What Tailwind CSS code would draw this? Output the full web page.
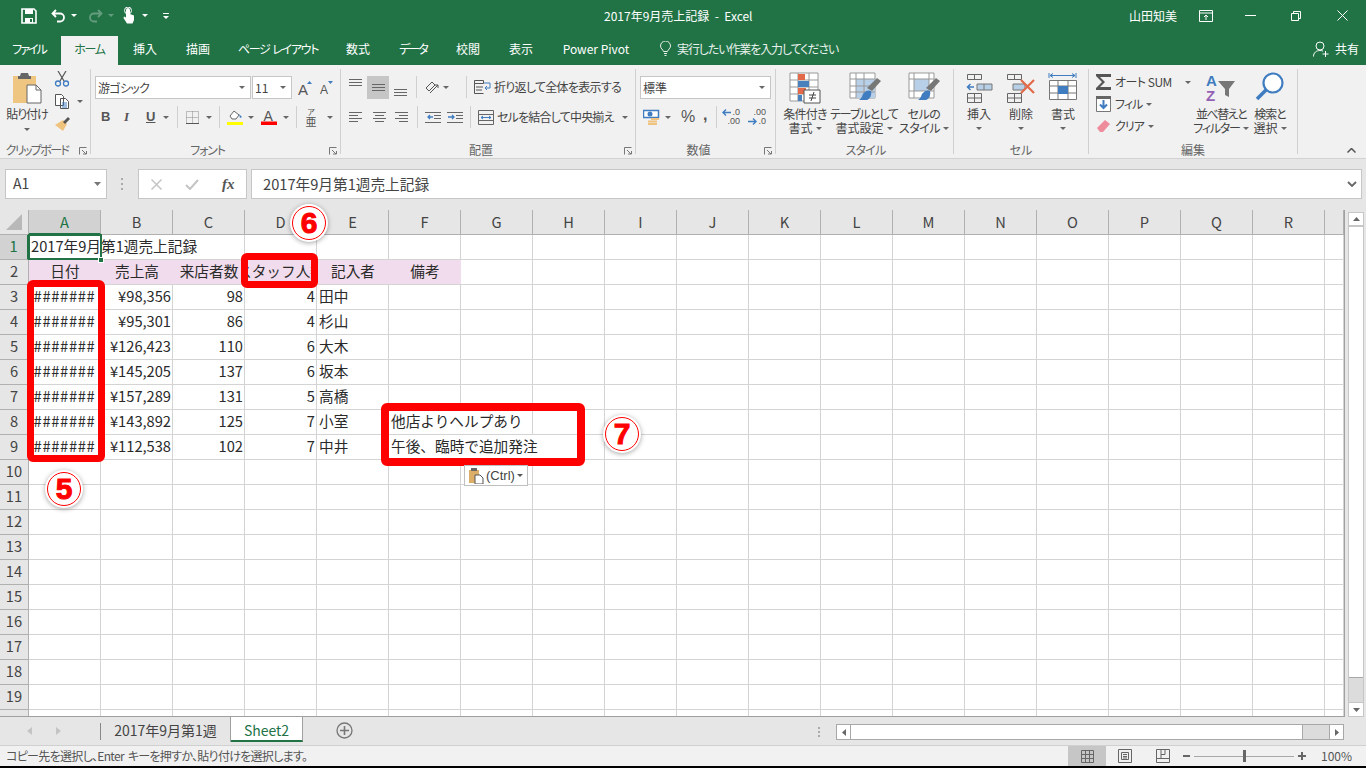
<!DOCTYPE html>
<html lang="ja">
<head>
<meta charset="UTF-8">
<title>2017年9月売上記録 - Excel</title>
<script src="https://cdn.jsdelivr.net/npm/@tailwindcss/browser@4"></script>
</head>
<body class="overflow-hidden bg-black">
<div class="relative w-[1366px] h-[768px] overflow-hidden flex flex-col font-['Noto_Sans_CJK_JP','Noto_Sans',sans-serif] text-[#444]">

  <!-- title bar -->
  <div class="h-[36px] shrink-0 bg-[#217346] text-white flex items-center pb-[5px] text-[12px]">
    <div class="w-[604px] flex items-center pl-[21px]">
      <svg class="w-[16px] h-[16px]" viewBox="0 0 16 16"><path d="M1 1h12l2 2v12H1z" fill="none" stroke="#fff" stroke-width="1.6"/><path d="M4 1h8v5H4zM4 10h8v5H4z" fill="#fff"/><path d="M9 11h2v3H9z" fill="#217346"/></svg>
      <svg class="w-[15px] h-[14px] ml-[14px]" viewBox="0 0 15 14"><path d="M5 1 1.500 4.500 5 8M2 4.500h7a4 4 0 0 1 0 8H6" fill="none" stroke="#fff" stroke-width="1.800"/></svg>
      <svg class="w-[6px] h-[3px] ml-[5px]" viewBox="0 0 6 3"><path d="M0 0h6L3 3z" fill="#fff"/></svg>
      <svg class="w-[15px] h-[14px] ml-[11px] opacity-30" viewBox="0 0 15 14"><path d="M10 1l3.500 3.500L10 8M13 4.500H6a4 4 0 0 0 0 8h3" fill="none" stroke="#fff" stroke-width="1.800"/></svg>
      <svg class="w-[6px] h-[3px] ml-[5px] opacity-30" viewBox="0 0 6 3"><path d="M0 0h6L3 3z" fill="#fff"/></svg>
      <svg class="w-[14px] h-[17px] ml-[8px]" viewBox="0 0 14 17"><path d="M4 7V3a2 2 0 0 1 4 0v4l4 1.500V13l-1.500 3.500H5L1.500 11 2 9.500l2 1z" fill="#fff"/><circle cx="6" cy="3.500" r="3.500" fill="none" stroke="#fff"/></svg>
      <svg class="w-[6px] h-[3px] ml-[6px]" viewBox="0 0 6 3"><path d="M0 0h6L3 3z" fill="#fff"/></svg>
      <svg class="w-[6px] h-[6px] ml-[15px]" viewBox="0 0 6 6"><path d="M0 0h6v1H0zM0 3h6L3 6z" fill="#fff"/></svg>
    </div>
    <div class="whitespace-pre">2017年9月売上記録  -  Excel</div>
    <div class="ml-auto flex items-center">
      <span class="w-[70px] -ml-[5px]">山田知美</span>
      <svg class="w-[14px] h-[12px] mr-[32px]" viewBox="0 0 14 12"><path d="M.5.500h13v11H.5zM.5 3h13M7 10V5M5 7l2-2 2 2" fill="none" stroke="#fff"/></svg>
      <svg class="w-[11px] h-[1px] mr-[35px]" viewBox="0 0 11 1"><path d="M0 0h11v1H0z" fill="#fff"/></svg>
      <svg class="w-[10px] h-[10px] mr-[36px]" viewBox="0 0 10 10"><path d="M.5 2.500h7v7h-7zM2.500 2.500v-2h7v7h-2" fill="none" stroke="#fff"/></svg>
      <svg class="w-[11px] h-[11px] mr-[18px]" viewBox="0 0 11 11"><path d="M.5.500l10 10M10.500.500l-10 10" fill="none" stroke="#fff"/></svg>
    </div>
  </div>

  <!-- ribbon tabs -->
  <div class="h-[29px] shrink-0 bg-[#217346] text-white flex text-[12px] leading-[25px] text-center [font-feature-settings:'palt']">
    <div class="w-[61px] pr-[3px] tracking-[-2px]">ファイル</div>
    <div class="w-[57px] bg-[#f1f1f1] text-[#217346] tracking-[-1.3px]">ホーム</div>
    <div class="w-[54px]">挿入</div>
    <div class="w-[52px]">描画</div>
    <div class="w-[108px] tracking-[-1.3px] whitespace-pre">ページ  レイアウト</div>
    <div class="w-[52px]">数式</div>
    <div class="w-[58px] tracking-[-2px]">データ</div>
    <div class="w-[52px]">校閲</div>
    <div class="w-[54px]">表示</div>
    <div class="w-[96px]">Power Pivot</div>
    <div class="flex items-center pl-[16px] pb-[4px] opacity-90">
      <svg class="w-[11px] h-[15px] mr-[6px]" viewBox="0 0 11 15"><path d="M3.500 10.500C3 8.500 .5 7.500.5 5a5 5 0 0 1 10 0c0 2.500-2.500 3.500-3 5.500zM4 12.500h3M4.500 14.500h2" fill="none" stroke="#fff"/></svg>
      <span class="tracking-[-1.1px]">実行したい作業を入力してください</span>
    </div>
    <div class="ml-auto flex items-center pr-[7px] pb-[4px]">
      <svg class="w-[16px] h-[16px] mr-[6px]" viewBox="0 0 16 16"><circle cx="7" cy="5" r="4" fill="none" stroke="#fff"/><path d="M.5 15.500c0-4 3-6 6.500-6 1 0 2 .2 3 .6M12.500 10v6M9.500 13h6" fill="none" stroke="#fff"/></svg>
      <span>共有</span>
    </div>
  </div>

  <!-- ribbon -->
  <div class="relative h-[94px] shrink-0 bg-[#f1f1f1] border-b border-[#d2d2d2] flex pt-[4px] text-[12px] leading-[14px] [font-feature-settings:'palt']">

    <!-- clipboard -->
    <div class="relative w-[91px] h-[85px] border-r border-[#d0d0d0] flex">
      <div class="w-[54px] flex flex-col items-center pt-[3px]">
        <svg class="w-[30px] h-[32px]" viewBox="0 0 30 32"><path d="M1 4h23v27H1z" fill="#eec682"/><path d="M6 4h2l1-3h7l1 3h2v3H6z" fill="#666"/><path d="M15 13h9l5 5v13H15z" fill="#fff" stroke="#666"/><path d="M24 13v5h5" fill="none" stroke="#666"/></svg>
        <div class="mt-[3px] h-[14px] tracking-[-1px] whitespace-nowrap">貼り付け</div>
        <svg class="w-[6px] h-[3px] mt-[7px]" viewBox="0 0 6 3"><path d="M0 0h6L3 3z" fill="#666"/></svg>
      </div>
      <div class="flex flex-col pt-[2px]">
        <svg class="w-[16px] h-[16px]" viewBox="0 0 16 16"><path d="M4 0l6 10M12 0 6 10" stroke="#555" fill="none" stroke-width="1.200"/><circle cx="4" cy="12.500" r="2.500" fill="none" stroke="#3f7cc0" stroke-width="1.300"/><circle cx="12" cy="12.500" r="2.500" fill="none" stroke="#3f7cc0" stroke-width="1.300"/></svg>
        <div class="flex items-center mt-[7px]">
          <svg class="w-[16px] h-[15px]" viewBox="0 0 16 15"><path d="M1.500.5h6l2 2v9h-8zM6.500 4.500h5l3 3v7h-8z" fill="#fff" stroke="#555" /><path d="M8 9h5M8 11h5M8 13h5" stroke="#3f7cc0"/></svg>
          <svg class="w-[6px] h-[3px] ml-[7px]" viewBox="0 0 6 3"><path d="M0 0h6L3 3z" fill="#666"/></svg>
        </div>
        <svg class="w-[16px] h-[15px] mt-[8px]" viewBox="0 0 16 15"><path d="M9 3l4 4-4 7-8-6z" fill="#efc27d"/><path d="M9 5l5-5 2 2-5 5z" fill="#555"/></svg>
      </div>
      <div class="absolute bottom-[-3px] left-[0px] w-[74px] text-center text-[#666] tracking-[-1.6px] whitespace-nowrap">クリップボード</div>
      <svg class="absolute right-[3px] bottom-[-1px] w-[8px] h-[8px]" viewBox="0 0 8 8"><path d="M.5 7.500v-7h7M3 3l4 4M4 7h3.500V4" fill="none" stroke="#777"/></svg>
    </div>

    <!-- font -->
    <div class="relative w-[250px] h-[85px] border-r border-[#d0d0d0] flex flex-col">
      <div class="mt-[7px] h-[23px] flex items-center pl-[4px]">
        <div class="w-[156px] h-[23px] bg-white border border-[#c6c6c6] flex items-center justify-between px-[2px]"><span class="tracking-[-0.7px]">游ゴシック</span><svg class="w-[6px] h-[3px] mr-[3px]" viewBox="0 0 6 3"><path d="M0 0h6L3 3z" fill="#666"/></svg></div>
        <div class="w-[40px] h-[23px] ml-[1px] bg-white border border-[#c6c6c6] flex items-center justify-between px-[2px]"><span>11</span><svg class="w-[6px] h-[3px] mr-[3px]" viewBox="0 0 6 3"><path d="M0 0h6L3 3z" fill="#666"/></svg></div>
        <svg class="w-[14px] h-[14px] ml-[6px] overflow-visible" viewBox="0 0 14 14"><text x="0" y="14" font-family="Liberation Sans" font-size="15" fill="#555">A</text><path d="M9 3h5l-2.500-3z" fill="#3f7cc0"/></svg>
        <svg class="w-[13px] h-[13px] ml-[8px] overflow-visible" viewBox="0 0 13 13"><text x="0" y="13" font-family="Liberation Sans" font-size="12" fill="#555">A</text><path d="M8 0h5l-2.500 3z" fill="#3f7cc0"/></svg>
      </div>
      <div class="mt-[6px] h-[24px] flex items-center text-[13px] font-['Liberation_Sans'] text-[#555]">
        <b class="ml-[10px] w-[10px]">B</b>
        <i class="ml-[13px] w-[8px] font-['Liberation_Serif'] font-bold">I</i>
        <b class="ml-[14px] w-[10px] underline">U</b>
        <svg class="w-[6px] h-[3px] ml-[7px]" viewBox="0 0 6 3"><path d="M0 0h6L3 3z" fill="#666"/></svg>
        <div class="w-px h-[22px] bg-[#d0d0d0] ml-[8px]"></div>
        <svg class="w-[13px] h-[13px] ml-[8px]" viewBox="0 0 13 13"><path d="M.5.500h12v12H.5zM6.500.500v12M.5 6.500h12" fill="none" stroke="#888" stroke-dasharray="1 1"/><path d="M0 12.500h13" stroke="#555"/></svg>
        <svg class="w-[6px] h-[3px] ml-[7px]" viewBox="0 0 6 3"><path d="M0 0h6L3 3z" fill="#666"/></svg>
        <div class="w-px h-[22px] bg-[#d0d0d0] ml-[7px]"></div>
        <svg class="w-[16px] h-[16px] ml-[7px]" viewBox="0 0 16 16"><path d="M3 7l4-5 5 4-3 4H5z" fill="#fff" stroke="#666"/><path d="M12 5l3 3-2 1z" fill="#3f7cc0"/><path d="M0 13h16v3H0z" fill="#ffff00"/></svg>
        <svg class="w-[6px] h-[3px] ml-[5px]" viewBox="0 0 6 3"><path d="M0 0h6L3 3z" fill="#666"/></svg>
        <svg class="w-[16px] h-[16px] ml-[7px]" viewBox="0 0 16 16"><text x="2.500" y="12" font-family="Liberation Sans" font-size="14" fill="#555">A</text><path d="M0 12.500h16v3.500H0z" fill="#ff0000"/></svg>
        <svg class="w-[6px] h-[3px] ml-[6px]" viewBox="0 0 6 3"><path d="M0 0h6L3 3z" fill="#666"/></svg>
        <div class="w-px h-[22px] bg-[#d0d0d0] ml-[7px]"></div>
        <span class="ml-[8px] w-[12px] text-[11px] leading-[11px] text-center font-['Noto_Sans_CJK_JP']"><span class="block text-[8px] leading-[8px]">ア</span>亜</span>
        <svg class="w-[6px] h-[3px] ml-[10px]" viewBox="0 0 6 3"><path d="M0 0h6L3 3z" fill="#666"/></svg>
      </div>
      <div class="absolute bottom-[-3px] left-0 right-[16px] text-center text-[#666] tracking-[-1.2px]">フォント</div>
      <svg class="absolute right-[3px] bottom-[-1px] w-[8px] h-[8px]" viewBox="0 0 8 8"><path d="M.5 7.500v-7h7M3 3l4 4M4 7h3.500V4" fill="none" stroke="#777"/></svg>
    </div>

    <!-- alignment -->
    <div class="relative w-[295px] h-[85px] border-r border-[#d0d0d0] flex flex-col">
      <div class="mt-[6px] h-[24px] flex items-center pl-[8px]">
        <svg class="w-[13px] h-[24px]" viewBox="0 0 13 24"><path d="M0 4.500h13M0 7.500h13M0 10.500h13" stroke="#666"/></svg>
        <div class="ml-[5px] w-[22px] h-[23px] bg-[#c6c6c6] flex items-center justify-center"><svg class="w-[13px] h-[7px]" viewBox="0 0 13 7"><path d="M0 .5h13M0 3.500h13M0 6.500h13" stroke="#666"/></svg></div>
        <svg class="w-[13px] h-[24px] ml-[5px]" viewBox="0 0 13 24"><path d="M0 14.500h13M0 17.500h13M0 20.500h13" stroke="#666"/></svg>
        <div class="w-px h-[22px] bg-[#d0d0d0] ml-[9px]"></div>
        <svg class="w-[15px] h-[15px] ml-[8px]" viewBox="0 0 15 15"><path d="M1 8l6-6 3 3-6 6zM5 13l8-8M13 5v3M13 5h-3" fill="none" stroke="#555"/></svg>
        <svg class="w-[6px] h-[3px] ml-[3px]" viewBox="0 0 6 3"><path d="M0 0h6L3 3z" fill="#666"/></svg>
        <div class="w-px h-[22px] bg-[#d0d0d0] ml-[17px]"></div>
        <svg class="w-[17px] h-[15px] ml-[7px]" viewBox="0 0 17 15"><path d="M.5.500h9v3h-9zM.5 3.500v10h9M2 7h7M2 10h6" fill="none" stroke="#555"/><path d="M10 3h6v5h-5M13 6l-2 2 2 2" fill="none" stroke="#3f7cc0"/></svg>
        <span class="ml-[3px] tracking-[-0.7px] whitespace-nowrap">折り返して全体を表示する</span>
      </div>
      <div class="mt-[6px] h-[24px] flex items-center pl-[8px]">
        <svg class="w-[13px] h-[10px]" viewBox="0 0 13 10"><path d="M0 .5h13M0 3.500h9M0 6.500h13M0 9.500h9" stroke="#666"/></svg>
        <svg class="w-[13px] h-[10px] ml-[11px]" viewBox="0 0 13 10"><path d="M0 .5h13M2 3.500h9M0 6.500h13M2 9.500h9" stroke="#666"/></svg>
        <svg class="w-[13px] h-[10px] ml-[9px]" viewBox="0 0 13 10"><path d="M0 .5h13M4 3.500h9M0 6.500h13M4 9.500h9" stroke="#666"/></svg>
        <div class="w-px h-[22px] bg-[#d0d0d0] ml-[9px]"></div>
        <svg class="w-[16px] h-[11px] ml-[7px]" viewBox="0 0 16 11"><path d="M0 .5h16M9 3.500h7M9 6.500h7M0 10.500h16" stroke="#666"/><path d="M8 5H3M5 3 3 5l2 2" fill="none" stroke="#3f7cc0" stroke-width="1.300"/></svg>
        <svg class="w-[16px] h-[11px] ml-[6px]" viewBox="0 0 16 11"><path d="M0 .5h16M9 3.500h7M9 6.500h7M0 10.500h16" stroke="#666"/><path d="M1 5h6M5 3l2 2-2 2" fill="none" stroke="#3f7cc0" stroke-width="1.300"/></svg>
        <div class="w-px h-[22px] bg-[#d0d0d0] ml-[7px]"></div>
        <svg class="w-[16px] h-[15px] ml-[7px] shrink-0" viewBox="0 0 16 15"><path d="M.5.500h15v14H.5zM.5 4.500h15M.5 10.500h15" fill="none" stroke="#666"/><path d="M3 7.500h10M5 6 3 7.500 5 9M11 6l2 1.500L11 9" fill="none" stroke="#3f7cc0"/></svg>
        <span class="ml-[3px] w-[119px] tracking-[-0.8px] whitespace-nowrap">セルを結合して中央揃え</span>
        <svg class="w-[6px] h-[3px] ml-[6px]" viewBox="0 0 6 3"><path d="M0 0h6L3 3z" fill="#666"/></svg>
      </div>
      <div class="absolute bottom-[-3px] left-0 right-[14px] text-center text-[#666]">配置</div>
      <svg class="absolute right-[3px] bottom-[-1px] w-[8px] h-[8px]" viewBox="0 0 8 8"><path d="M.5 7.500v-7h7M3 3l4 4M4 7h3.500V4" fill="none" stroke="#777"/></svg>
    </div>

    <!-- number -->
    <div class="relative w-[140px] h-[85px] border-r border-[#d0d0d0] flex flex-col">
      <div class="mt-[7px] h-[23px] pl-[4px] flex items-center">
        <div class="w-[131px] h-[23px] bg-white border border-[#c6c6c6] flex items-center justify-between px-[2px]"><span>標準</span><svg class="w-[6px] h-[3px] mr-[3px]" viewBox="0 0 6 3"><path d="M0 0h6L3 3z" fill="#666"/></svg></div>
      </div>
      <div class="mt-[6px] h-[24px] flex items-center pl-[7px] font-['Liberation_Sans']">
        <svg class="w-[17px] h-[16px]" viewBox="0 0 17 16"><path d="M.5 1.500h15v7H.5z" fill="#fff" stroke="#3f7cc0" stroke-width="1.500"/><circle cx="7" cy="5" r="2.500" fill="#3f7cc0"/><path d="M8 9h8v2H8zM5 11.500h9v2H5zM5 14h9v2H5z" fill="#efc27d"/></svg>
        <svg class="w-[6px] h-[3px] ml-[5px]" viewBox="0 0 6 3"><path d="M0 0h6L3 3z" fill="#666"/></svg>
        <span class="ml-[10px] w-[14px] text-[16px] text-[#555] -mr-[2px]">%</span>
        <b class="ml-[10px] w-[6px] text-[16px] leading-[12px] pb-[4px] text-[#555]">,</b>
        <div class="w-px h-[22px] bg-[#d0d0d0] ml-[7px]"></div>
        <div class="w-[20px] ml-[3px] text-[9px] leading-[9px] text-[#555] flex flex-col items-end"><span class="flex items-center"><svg class="w-[9px] h-[7px] mr-[1px]" viewBox="0 0 9 7"><path d="M9 3.500H1M4 .5 1 3.500l3 3" fill="none" stroke="#3f7cc0" stroke-width="1.400"/></svg>.0</span><span>.00</span></div>
        <div class="w-[20px] ml-[6px] text-[9px] leading-[9px] text-[#555] flex flex-col items-end"><span>.00</span><span class="flex items-center"><svg class="w-[9px] h-[7px] mr-[1px]" viewBox="0 0 9 7"><path d="M0 3.500h8M5 .5l3 3-3 3" fill="none" stroke="#3f7cc0" stroke-width="1.400"/></svg>.0</span></div>
      </div>
      <div class="absolute bottom-[-3px] left-[-14px] right-0 text-center text-[#666]">数値</div>
      <svg class="absolute right-[3px] bottom-[-1px] w-[8px] h-[8px]" viewBox="0 0 8 8"><path d="M.5 7.500v-7h7M3 3l4 4M4 7h3.500V4" fill="none" stroke="#777"/></svg>
    </div>

    <!-- styles -->
    <div class="relative w-[178px] h-[85px] border-r border-[#d0d0d0] flex pl-[3px]">
      <div class="w-[52px] flex flex-col items-center pt-[3px]">
        <svg class="w-[32px] h-[32px]" viewBox="0 0 32 32"><path d="M1 1h28v28H1z" fill="#fff" stroke="#999"/><path d="M9 1v28M20 1v28M1 8h28M1 15h28M1 22h28" stroke="#999"/><path d="M9 2h7v6H9z" fill="#e2694a"/><path d="M9 9h11v6H9z" fill="#4a80bb"/><path d="M9 16h8v6H9z" fill="#e2694a"/><path d="M9 23h4v6H9z" fill="#4a80bb"/><path d="M15 18h16v13H15z" fill="#fff" stroke="#555"/><path d="M20 23h7M20 26h7M25 20l-3 9" stroke="#444" fill="none"/></svg>
        <div class="mt-[3px] h-[14px] whitespace-nowrap tracking-[-0.7px]">条件付き</div>
        <div class="h-[14px] flex items-center whitespace-nowrap">書式<svg class="w-[6px] h-[3px] ml-[3px]" viewBox="0 0 6 3"><path d="M0 0h6L3 3z" fill="#666"/></svg></div>
      </div>
      <div class="w-[66px] flex flex-col items-center pt-[3px]">
        <svg class="w-[32px] h-[32px] ml-[2px]" viewBox="0 0 32 32"><path d="M1 1h25v25H1z" fill="#fff" stroke="#999"/><path d="M7 7h19v19H7z" fill="#b8cfe8"/><path d="M7 1v25M15 1v25M1 7h25M1 14h25M1 20h25" stroke="#999"/><path d="M18 16l10-10 4 3-9 10z" fill="#777"/><path d="M14 22c3-4 6-4 8-3 1 4-1 8-4 9h-8c2-1 3-3 4-6z" fill="#3f7cc0"/></svg>
        <div class="mt-[3px] h-[14px] whitespace-nowrap tracking-[-1px]">テーブルとして</div>
        <div class="h-[14px] flex items-center whitespace-nowrap">書式設定<svg class="w-[6px] h-[3px] ml-[3px]" viewBox="0 0 6 3"><path d="M0 0h6L3 3z" fill="#666"/></svg></div>
      </div>
      <div class="w-[50px] ml-[2px] flex flex-col items-center pt-[3px]">
        <svg class="w-[32px] h-[32px]" viewBox="0 0 32 32"><path d="M1 1h25v25H1z" fill="#fff" stroke="#999"/><path d="M6 7h15v12H6z" fill="#b8cfe8"/><path d="M6 1v25M21 1v25M1 7h25M1 19h25" stroke="#999"/><path d="M18 16l10-10 4 3-9 10z" fill="#777"/><path d="M14 22c3-4 6-4 8-3 1 4-1 8-4 9h-8c2-1 3-3 4-6z" fill="#3f7cc0"/></svg>
        <div class="mt-[3px] h-[14px] whitespace-nowrap tracking-[-0.5px]">セルの</div>
        <div class="h-[14px] flex items-center whitespace-nowrap tracking-[-0.5px]">スタイル<svg class="w-[6px] h-[3px] ml-[3px]" viewBox="0 0 6 3"><path d="M0 0h6L3 3z" fill="#666"/></svg></div>
      </div>
      <div class="absolute bottom-[-3px] left-0 right-[-2px] text-center text-[#666] tracking-[-0.8px]">スタイル</div>
    </div>

    <!-- cells -->
    <div class="relative w-[135px] h-[85px] border-r border-[#d0d0d0] flex pl-[4px]">
      <div class="w-[42px] flex flex-col items-center pt-[3px]">
        <svg class="w-[27px] h-[32px]" viewBox="0 0 27 32"><path d="M1.500 2.500h14v5h-14zM8.500 2.500v5M1.500 21.500h14v9h-14zM1.500 26h14M8.500 21.500v9" fill="none" stroke="#666"/><path d="M11 12h15v6H11zM18 12v6" fill="#b8cfe8" stroke="#777"/><path d="M8 15H2M4.500 12 1.500 15l3 3" fill="none" stroke="#3f7cc0" stroke-width="1.500"/></svg>
        <div class="mt-[3px] h-[14px]">挿入</div>
        <svg class="w-[6px] h-[3px] mt-[6px]" viewBox="0 0 6 3"><path d="M0 0h6L3 3z" fill="#666"/></svg>
      </div>
      <div class="w-[42px] flex flex-col items-center pt-[3px]">
        <svg class="w-[30px] h-[32px]" viewBox="0 0 30 32"><path d="M1.500 2.500h14v5h-14zM8.500 2.500v5M1.500 21.500h14v9h-14zM1.500 26h14M8.500 21.500v9" fill="none" stroke="#666"/><path d="M7 12h12v6H7z" fill="#b8cfe8" stroke="#777"/><path d="M15 8l13 13M28 8 15 21" stroke="#e2694a" stroke-width="2.200"/></svg>
        <div class="mt-[3px] h-[14px]">削除</div>
        <svg class="w-[6px] h-[3px] mt-[6px]" viewBox="0 0 6 3"><path d="M0 0h6L3 3z" fill="#666"/></svg>
      </div>
      <div class="w-[42px] flex flex-col items-center pt-[3px]">
        <svg class="w-[30px] h-[32px]" viewBox="0 0 30 32"><path d="M1 1v5M28 1v5M2 3.500h25M2 3.500l3-2M2 3.500l3 2M27 3.500l-3-2M27 3.500l-3 2" fill="none" stroke="#3f7cc0"/><path d="M1.500 8.500h27v19h-27zM10 8.500v19M20 8.500v19M1.500 14h27M1.500 21h27" fill="#fff" stroke="#777"/><path d="M10 14h10v8H10z" fill="#3f7cc0"/></svg>
        <div class="mt-[3px] h-[14px]">書式</div>
        <svg class="w-[6px] h-[3px] mt-[6px]" viewBox="0 0 6 3"><path d="M0 0h6L3 3z" fill="#666"/></svg>
      </div>
      <div class="absolute bottom-[-3px] left-0 right-0 text-center text-[#666]">セル</div>
    </div>

    <!-- editing -->
    <div class="relative w-[209px] h-[85px] border-r border-[#d0d0d0] flex pl-[7px]">
      <div class="w-[100px] flex flex-col pt-[2px]">
        <div class="h-[22px] flex items-center"><svg class="w-[16px] h-[16px]" viewBox="0 0 16 16"><path d="M0 0h15v3H4l5 5-5 5h11v3H0v-2l6-6-6-6z" fill="#555"/></svg><span class="ml-[3px] w-[62px] tracking-[-0.5px] whitespace-nowrap">オート SUM</span><svg class="w-[6px] h-[3px] ml-[8px]" viewBox="0 0 6 3"><path d="M0 0h6L3 3z" fill="#666"/></svg></div>
        <div class="h-[22px] flex items-center"><svg class="w-[15px] h-[16px]" viewBox="0 0 15 16"><path d="M.5.500h14v15H.5z" fill="#fff" stroke="#777"/><path d="M0 0h15v3H0z" fill="#666"/><path d="M7.500 4v8M4 8.500l3.500 3.500L11 8.500" fill="none" stroke="#3f7cc0" stroke-width="2"/></svg><span class="ml-[4px] tracking-[-1px]">フィル</span><svg class="w-[6px] h-[3px] ml-[4px]" viewBox="0 0 6 3"><path d="M0 0h6L3 3z" fill="#666"/></svg></div>
        <div class="h-[22px] flex items-center"><svg class="w-[15px] h-[14px]" viewBox="0 0 15 14"><path d="M9 1l5 4-7 8H4L1 9z" fill="#ee8c9c"/></svg><span class="ml-[4px] tracking-[-1px]">クリア</span><svg class="w-[6px] h-[3px] ml-[4px]" viewBox="0 0 6 3"><path d="M0 0h6L3 3z" fill="#666"/></svg></div>
      </div>
      <div class="w-[60px] flex flex-col items-center pt-[3px] -ml-[5px]">
        <svg class="w-[32px] h-[32px]" viewBox="0 0 32 32"><text x="1" y="14" font-family="Liberation Sans" font-weight="bold" font-size="15" fill="#3f7cc0">A</text><text x="1" y="29" font-family="Liberation Sans" font-weight="bold" font-size="15" fill="#9360b5">Z</text><path d="M13 9h17l-6 8v8l-4-2v-6z" fill="#777"/></svg>
        <div class="mt-[3px] h-[14px] whitespace-nowrap tracking-[-1.5px]">並べ替えと</div>
        <div class="h-[14px] flex items-center whitespace-nowrap tracking-[-1.2px]">フィルター<svg class="w-[6px] h-[3px] ml-[3px]" viewBox="0 0 6 3"><path d="M0 0h6L3 3z" fill="#666"/></svg></div>
      </div>
      <div class="w-[38px] flex flex-col items-center pt-[3px]">
        <svg class="w-[30px] h-[30px]" viewBox="0 0 30 30"><circle cx="18" cy="11" r="9.500" fill="#fff" stroke="#3f7cc0" stroke-width="2.200"/><path d="M11 18 2 27" stroke="#3f7cc0" stroke-width="3.500"/></svg>
        <div class="mt-[5px] h-[14px] whitespace-nowrap tracking-[-1px]">検索と</div>
        <div class="h-[14px] flex items-center whitespace-nowrap">選択<svg class="w-[6px] h-[3px] ml-[3px]" viewBox="0 0 6 3"><path d="M0 0h6L3 3z" fill="#666"/></svg></div>
      </div>
      <div class="absolute bottom-[-3px] left-0 right-0 text-center text-[#666]">編集</div>
    </div>

    <svg class="absolute right-[10px] bottom-[5px] w-[9px] h-[5px]" viewBox="0 0 9 5"><path d="M.5 4.500l4-4 4 4" fill="none" stroke="#555" stroke-width="1.500"/></svg>
  </div>

  <!-- formula bar -->
  <div class="h-[51px] shrink-0 bg-[#e6e6e6] pt-[10px] flex items-start">
    <div class="ml-[5px] w-[102px] h-[30px] bg-white border border-[#c6c6c6] flex items-center justify-between pl-[7px] pr-[5px] pb-[1px] text-[14px] text-[#444]"><span>A1</span><svg class="w-[7px] h-[4px]" viewBox="0 0 7 4"><path d="M0 0h7L3.500 4z" fill="#777"/></svg></div>
    <svg class="ml-[14px] mt-[9px] w-[3px] h-[12px]" viewBox="0 0 3 12"><path d="M0 0h2v2H0zM0 5h2v2H0zM0 10h2v2H0z" fill="#aaa"/></svg>
    <div class="ml-[14px] w-[109px] h-[30px] bg-white border border-[#c6c6c6] flex items-center">
      <svg class="ml-[12px] w-[11px] h-[11px]" viewBox="0 0 11 11"><path d="M.5.500l10 10M10.500.500l-10 10" stroke="#c4c4c4" stroke-width="1.500"/></svg>
      <svg class="ml-[23px] w-[14px] h-[11px]" viewBox="0 0 14 11"><path d="M1 6l4 4 8-9" fill="none" stroke="#c4c4c4" stroke-width="2"/></svg>
      <i class="ml-[23px] font-['Liberation_Serif'] font-bold text-[15px] text-[#555]">fx</i>
    </div>
    <div class="ml-[4px] w-[1111px] h-[30px] bg-white border border-[#c6c6c6] flex items-center justify-between pl-[11px] pr-[4px] pb-[1px] text-[14.67px] text-[#444]"><span>2017年9月第1週売上記録</span><svg class="w-[10px] h-[6px]" viewBox="0 0 10 6"><path d="M1 1l4 4 4-4" fill="none" stroke="#666" stroke-width="1.800"/></svg></div>
  </div>

  <!-- sheet grid and vertical scrollbar -->
  <div class="h-[507px] shrink-0 bg-[#e6e6e6] flex">
    <div id="sheet" class="w-[1345px] h-[507px] overflow-hidden bg-white border-r border-b border-[#a0a0a0] text-[14.67px] leading-[22px] text-[#2a2a2a] grid grid-cols-[29px_repeat(18,72px)_19px] auto-rows-[25px]"></div>
    <div class="ml-[3px] w-[16px] mt-[2px] flex flex-col h-[505px] border-x border-[#c6c6c6] bg-[#dcdcdc]">
      <div class="h-[15px] bg-white border-t border-b-2 border-[#c6c6c6] flex items-center justify-center"><svg class="w-[7px] h-[4px]" viewBox="0 0 7 4"><path d="M0 4h7L3.500 0z" fill="#666"/></svg></div>
      <div class="h-[451px] bg-white border-b border-[#a8a8a8]"></div>
      <div class="mt-auto h-[15px] bg-white border-y border-[#c6c6c6] flex items-center justify-center"><svg class="w-[7px] h-[4px]" viewBox="0 0 7 4"><path d="M0 0h7L3.500 4z" fill="#666"/></svg></div>
    </div>
  </div>

  <!-- sheet tabs -->
  <div class="h-[28px] shrink-0 bg-[#e6e6e6] flex items-start text-[14px] text-[#444]">
    <svg class="ml-[27px] mt-[10px] w-[5px] h-[8px]" viewBox="0 0 5 8"><path d="M5 0v8L0 4z" fill="#c4c4c4"/></svg>
    <svg class="ml-[24px] mt-[10px] w-[5px] h-[8px]" viewBox="0 0 5 8"><path d="M0 0v8l5-4z" fill="#c4c4c4"/></svg>
    <div class="ml-[39px] mt-[6px] w-px h-[17px] bg-[#888]"></div>
    <div class="w-[130px] h-[25px] text-center leading-[26px] border-r border-[#a0a0a0]">2017年9月第1週</div>
    <div class="w-[72px] h-[25px] bg-white text-center leading-[26px] text-[#217346] border-b-2 border-[#217346] border-r border-r-[#a0a0a0]">Sheet2</div>
    <svg class="ml-[33px] mt-[5px] w-[17px] h-[17px]" viewBox="0 0 17 17"><circle cx="8.500" cy="8.500" r="7.500" fill="none" stroke="#777" stroke-width="1.300"/><path d="M8.500 4v9M4 8.500h9" stroke="#777" stroke-width="1.600"/></svg>
    <svg class="ml-[465px] mt-[10px] w-[2px] h-[10px]" viewBox="0 0 2 10"><path d="M0 0h2v2H0zM0 4h2v2H0zM0 8h2v2H0z" fill="#aaa"/></svg>
    <div class="ml-[16px] mt-[7px] w-[508px] h-[16px] border border-[#a8a8a8] bg-[#dcdcdc] flex">
      <div class="w-[14px] bg-white border-r border-[#a8a8a8] flex items-center justify-center"><svg class="w-[4px] h-[7px]" viewBox="0 0 4 7"><path d="M4 0v7L0 3.500z" fill="#666"/></svg></div>
      <div class="w-[452px] bg-white border-r border-[#a8a8a8]"></div>
      <div class="ml-auto w-[14px] bg-white border-l border-[#a8a8a8] flex items-center justify-center"><svg class="w-[4px] h-[7px]" viewBox="0 0 4 7"><path d="M0 0v7l4-3.500z" fill="#666"/></svg></div>
    </div>
  </div>

  <!-- status bar -->
  <div class="h-[21px] shrink-0 bg-[#f1f1f1] border-t border-[#d0d0d0] flex items-center text-[12px] text-[#555] [font-feature-settings:'palt']">
    <span class="pl-[6px] w-[1068px] whitespace-pre tracking-[-0.7px]">コピー先を選択し、Enter  キーを押すか、貼り付けを選択します。</span>
    <div class="w-[38px] h-[20px] bg-[#c6c6c6] flex items-center justify-center"><svg class="w-[13px] h-[13px]" viewBox="0 0 13 13"><path d="M.5.500h12v12H.5zM4.500.500v12M8.500.500v12M.5 4.500h12M.5 8.500h12" fill="none" stroke="#666"/></svg></div>
    <svg class="ml-[12px] w-[14px] h-[14px]" viewBox="0 0 14 14"><path d="M.5.500h13v13H.5zM3.500 3.500h7v7h-7zM5 5.500h4M5 7.500h4M5 9h4" fill="none" stroke="#666"/></svg>
    <svg class="ml-[24px] w-[14px] h-[14px]" viewBox="0 0 14 14"><path d="M.5.500h13v13H.5zM.5 9.500h13M5 .5v9M9 .5v5H5" fill="none" stroke="#666"/></svg>
    <svg class="ml-[13px] w-[7px] h-[2px]" viewBox="0 0 7 2"><path d="M0 0h7v2H0z" fill="#666"/></svg>
    <div class="relative ml-[4px] w-[100px] h-px bg-[#a8a8a8]"><div class="absolute left-[49px] top-[-6px] w-[3px] h-[12px] bg-[#666]"></div></div>
    <svg class="ml-[4px] w-[8px] h-[8px]" viewBox="0 0 8 8"><path d="M3 0h2v3h3v2H5v3H3V5H0V3h3z" fill="#666"/></svg>
    <span class="ml-[15px]">100%</span>
  </div>
  <div class="h-[2px] shrink-0 bg-black"></div>

  <!-- annotations over the sheet -->
  <div class="absolute left-[28px] top-[234px] w-[74px] h-[26px] border-2 border-[#217346] pointer-events-none"></div>
  <div class="absolute left-[98px] top-[257px] w-[6px] h-[6px] bg-[#217346] border border-white pointer-events-none"></div>

  <div class="absolute left-[27px] top-[280px] w-[78px] h-[182px] border-[7px] border-[#ff0000] rounded-[6px]"></div>
  <div class="absolute left-[241px] top-[253px] w-[77px] h-[35px] border-[7px] border-[#ff0000] rounded-[6px]"></div>
  <div class="absolute left-[381px] top-[403px] w-[204px] h-[63px] border-[8px] border-[#ff0000] rounded-[6px]"></div>

  <div class="absolute left-[464px] top-[465px] w-[64px] h-[21px] bg-white border border-[#c0c0c0] flex items-center pl-[3px] text-[13px] text-[#444] font-['Liberation_Sans']">
    <svg class="w-[17px] h-[16px]" viewBox="0 0 17 16"><path d="M1 2h10v13H1z" fill="#dcae68"/><path d="M3 0h6v3H3z" fill="#666"/><path d="M7 7h5l3 3v6H7z" fill="#fff" stroke="#555"/></svg>
    <span class="ml-[1px]">(Ctrl)</span>
    <svg class="ml-[2px] w-[6px] h-[3px]" viewBox="0 0 6 3"><path d="M0 0h6L3 3z" fill="#555"/></svg>
  </div>

  <div class="absolute left-[45px] top-[470px] w-[38px] h-[38px] rounded-full bg-white shadow-[0_1px_5px_rgba(0,0,0,0.35)] p-[2px]"><div class="w-full h-full rounded-full border border-[#ff0000] flex items-center justify-center font-['Liberation_Sans'] font-bold text-[30px] leading-none text-[#ff0000] [-webkit-text-stroke:1px_#ff0000]">5</div></div>
  <div class="absolute left-[290px] top-[204px] w-[38px] h-[38px] rounded-full bg-white shadow-[0_1px_5px_rgba(0,0,0,0.35)] p-[2px]"><div class="w-full h-full rounded-full border border-[#ff0000] flex items-center justify-center font-['Liberation_Sans'] font-bold text-[30px] leading-none text-[#ff0000] [-webkit-text-stroke:1px_#ff0000]">6</div></div>
  <div class="absolute left-[603px] top-[415px] w-[38px] h-[38px] rounded-full bg-white shadow-[0_1px_5px_rgba(0,0,0,0.35)] p-[2px]"><div class="w-full h-full rounded-full border border-[#ff0000] flex items-center justify-center font-['Liberation_Sans'] font-bold text-[30px] leading-none text-[#ff0000] [-webkit-text-stroke:1px_#ff0000]">7</div></div>
</div>

<script>
  const cols = ['A','B','C','D','E','F','G','H','I','J','K','L','M','N','O','P','Q','R',''];
  const hash = '#######';
  const rows = [
    [hash, '¥98,356', '98', '4', '田中'],
    [hash, '¥95,301', '86', '4', '杉山'],
    [hash, '¥126,423', '110', '6', '大木'],
    [hash, '¥145,205', '137', '6', '坂本'],
    [hash, '¥157,289', '131', '5', '高橋'],
    [hash, '¥143,892', '125', '7', '小室', '他店よりヘルプあり'],
    [hash, '¥112,538', '102', '7', '中井', '午後、臨時で追加発注'],
  ];
  const heads = ['日付', '売上高', '来店者数', 'スタッフ人数', '記入者', '備考'];
  let html = '<div class="bg-[#e6e6e6] border-r border-b border-[#b0b0b0] flex items-center justify-center"><svg class="w-[18px] h-[18px]" viewBox="0 0 18 18"><path d="M17 1v16H1z" fill="#b8b8b8"/></svg></div>';

  cols.forEach((c, i) => {
    html += i === 0
      ? `<div class="bg-[#d2d2d2] text-[#217346] border-r border-b-2 border-[#b0b0b0] border-b-[#217346] text-center leading-[24px]">${c}</div>`
      : `<div class="bg-[#e6e6e6] border-r border-b border-[#b0b0b0] text-center text-[#444] leading-[24px]">${c}</div>`;
  });

  for (let r = 1; r <= 20; r++) {
    html += r === 1
      ? `<div class="bg-[#d2d2d2] text-[#217346] border-r-2 border-b border-[#b0b0b0] border-r-[#217346] text-center">${r}</div>`
      : `<div class="bg-[#e6e6e6] border-r border-b border-[#b0b0b0] text-center text-[#444]">${r}</div>`;
    for (let c = 0; c < 19; c++) {
      let text = '';
      let cls = 'border-r border-b border-[#d4d4d4] whitespace-nowrap';
      if (r === 1 && c === 0) {
        text = '2017年9月第1週売上記録';
        cls = 'border-b border-[#d4d4d4] whitespace-nowrap pl-[2px]';
      } else if (r === 1 && c === 1) {
        cls = 'border-b border-[#d4d4d4]';
      } else if (r === 2 && c < 6) {
        text = heads[c];
        cls = 'bg-[#f0dcec] border-b border-[#d4d4d4] whitespace-nowrap overflow-hidden flex justify-center';
      } else if (r >= 3 && r <= 9 && rows[r - 3][c]) {
        text = rows[r - 3][c];
        if (c === 0) cls += ' text-center tracking-[0.7px]';
        else if (c < 4) cls += ' text-right pr-[1px]';
        else if (c === 5) cls = 'border-b border-[#d4d4d4] whitespace-nowrap pl-[2px]';
        else cls += ' pl-[2px]';
      } else if (r === 9 && c === 6) {
        cls = 'border-b border-[#d4d4d4]';
      }
      html += `<div class="${cls}">${text}</div>`;
    }
  }
  document.getElementById('sheet').innerHTML = html;
</script>
</body>
</html>
